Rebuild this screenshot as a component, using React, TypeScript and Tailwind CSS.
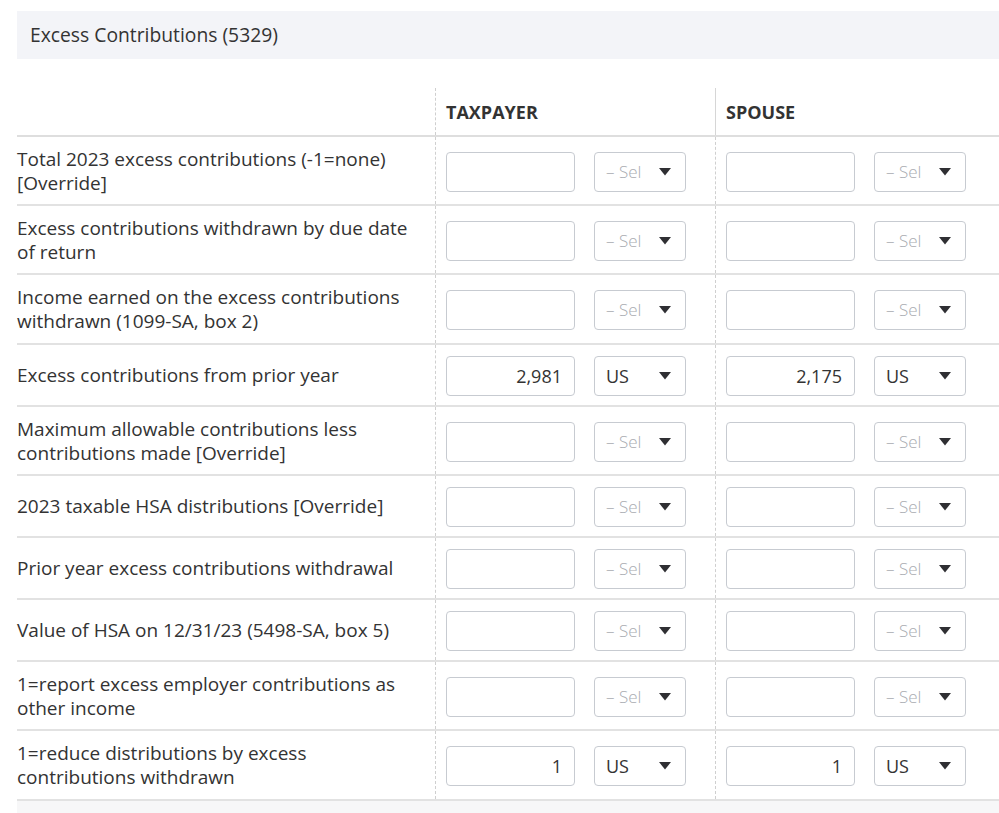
import React from 'react';

type Row = {
  label: string[];
  h: string;
  taxpayer?: string;
  spouse?: string;
  tpSel?: string;
  spSel?: string;
};

const rows: Row[] = [
  { label: ['Total 2023 excess contributions (-1=none)', '[Override]'], h: 'h-[69px]' },
  { label: ['Excess contributions withdrawn by due date', 'of return'], h: 'h-[69px]' },
  { label: ['Income earned on the excess contributions', 'withdrawn (1099-SA, box 2)'], h: 'h-[70px]' },
  { label: ['Excess contributions from prior year'], h: 'h-[62px]', taxpayer: '2,981', spouse: '2,175', tpSel: 'US', spSel: 'US' },
  { label: ['Maximum allowable contributions less', 'contributions made [Override]'], h: 'h-[69px]' },
  { label: ['2023 taxable HSA distributions [Override]'], h: 'h-[62px]' },
  { label: ['Prior year excess contributions withdrawal'], h: 'h-[62px]' },
  { label: ['Value of HSA on 12/31/23 (5498-SA, box 5)'], h: 'h-[62px]' },
  { label: ['1=report excess employer contributions as', 'other income'], h: 'h-[69px]' },
  { label: ['1=reduce distributions by excess', 'contributions withdrawn'], h: 'h-[70px]', taxpayer: '1', spouse: '1', tpSel: 'US', spSel: 'US' },
];

function Caret() {
  return (
    <svg width="12" height="8" viewBox="0 0 12 8" className="shrink-0">
      <path d="M0 0 L12 0 L6 7.5 Z" fill="#2f2f33" />
    </svg>
  );
}

function NumberBox({ value }: { value?: string }) {
  return (
    <div className="w-[129px] h-[40px] rounded-[4px] border border-[#c7cbd1] bg-white flex items-center justify-end pr-[12px] text-[18px] text-[#333]">
      {value}
    </div>
  );
}

function SelectBox({ value }: { value?: string }) {
  return (
    <div className="ml-[19px] w-[92px] h-[40px] rounded-[4px] border border-[#c7cbd1] bg-white flex items-center pl-[11px] pr-[14px]">
      <div className="flex-1 whitespace-nowrap">
        {value ? (
          <span className="text-[18px] text-[#333]">{value}</span>
        ) : (
          <span className="text-[17px] font-light text-[#a9acb1]">– Sel</span>
        )}
      </div>
      <Caret />
    </div>
  );
}

export default function App() {
  return (
    <div className="min-h-screen bg-white pl-[17px] pt-[11px] overflow-hidden" style={{ fontFamily: '"Open Sans", "Noto Sans", sans-serif' }}>
      {/* Section header */}
      <div className="h-[48px] bg-[#f3f4f8] flex items-center pl-[13px] text-[19.3px] text-[#333]">
        Excess Contributions (5329)
      </div>

      {/* Table */}
      <div className="mt-[29px]">
        <div className="flex h-[49px] border-b-2 border-[#dedede]">
          <div className="w-[418px]" />
          <div className="w-[280px] border-l border-dashed border-[#cfcfcf] flex items-center pl-[10px] pt-[1px] text-[18px] font-bold text-[#333]">
            TAXPAYER
          </div>
          <div className="w-[280px] border-l border-[#d6d6d6] flex items-center pl-[10px] pt-[1px] text-[18px] font-bold text-[#333]">
            SPOUSE
          </div>
          <div className="flex-1" />
        </div>

        {rows.map((r, i) => (
          <div key={i} className={`flex border-b-2 border-[#e2e2e2] ${r.h}`}>
            <div className="w-[418px] flex flex-col justify-center text-[19px] leading-[24px] text-[#333]">
              {r.label.map((l, j) => (
                <div key={j}>{l}</div>
              ))}
            </div>
            <div className="w-[280px] border-l border-dashed border-[#cfcfcf] flex items-center pl-[10px] pt-[2px]">
              <NumberBox value={r.taxpayer} />
              <SelectBox value={r.tpSel} />
            </div>
            <div className="w-[280px] border-l border-dashed border-[#cfcfcf] flex items-center pl-[10px] pt-[2px]">
              <NumberBox value={r.spouse} />
              <SelectBox value={r.spSel} />
            </div>
            <div className="flex-1" />
          </div>
        ))}

        <div className="h-[40px] bg-[#f7f7f8]" />
      </div>
    </div>
  );
}
